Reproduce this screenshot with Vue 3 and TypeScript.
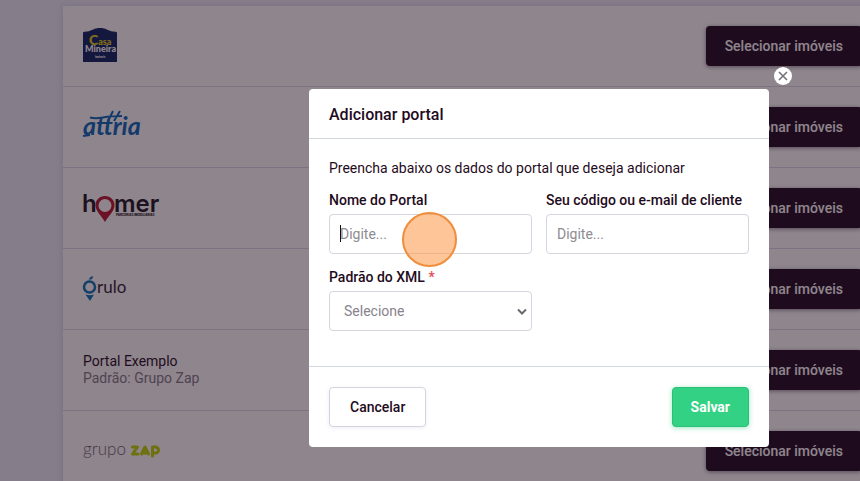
<script setup lang="ts">
import { ref } from 'vue'

interface Portal {
  id: string
  name: string
  standard?: string
}

const portals: Portal[] = [
  { id: 'casa-mineira', name: 'Casa Mineira' },
  { id: 'attria', name: 'attria' },
  { id: 'homer', name: 'homer' },
  { id: 'orulo', name: 'Órulo' },
  { id: 'exemplo', name: 'Portal Exemplo', standard: 'Grupo Zap' },
  { id: 'zap', name: 'grupo zap' },
]

const portalName = ref('')
const clientCode = ref('')
const xmlStandard = ref('')
</script>

<template>
  <div class="page">
    <main class="portals">
      <section v-for="portal in portals" :key="portal.id" class="portal">
        <svg v-if="portal.id === 'casa-mineira'" class="logo" width="80" height="40" viewBox="0 0 80 40" role="img" :aria-label="portal.name">
          <path d="M0 7Q0 5.500 3 5.500H5C9 4.500 11 2 17 2S25 4.500 29 5.500H31Q34 5.500 34 7V36H0Z" fill="#0a2460" />
          <text x="6" y="19" class="rounded" font-size="9" fill="#e0d01c"><tspan font-size="14">C</tspan>asa</text>
          <text x="2" y="26" class="rounded" font-size="9" fill="#fff">Mineira</text>
          <text x="12" y="32" class="rounded" font-size="3" fill="#fff">imóveis</text>
        </svg>
        <svg v-else-if="portal.id === 'attria'" class="logo" width="80" height="40" viewBox="0 0 80 40" role="img" :aria-label="portal.name">
          <text x="0" y="28" class="script" font-size="25" fill="#0868b8">attria</text>
          <path d="M7 10.500Q12 12 20 10.500T39 9M25 14L30 4M31 14L37 4M7 28L0 29" fill="none" stroke="#0868b8" stroke-width="2" />
        </svg>
        <svg v-else-if="portal.id === 'homer'" class="logo" width="80" height="40" viewBox="0 0 80 40" role="img" :aria-label="portal.name">
          <text x="-1" y="24" class="brand" font-weight="600" font-size="24" fill="#1b1620">h</text>
          <path d="M22 8C16.500 8 12.500 12 12.500 17C12.500 23 18 27 22 34C26 27 31.500 23 31.500 17C31.500 12 27.500 8 22 8ZM22 11A6.500 6.500 0 1 1 22 24A6.500 6.500 0 1 1 22 11Z" fill="#b81830" fill-rule="evenodd" />
          <text x="31" y="24" class="brand" font-weight="600" font-size="24" fill="#1b1620">mer</text>
          <text x="33" y="28" class="brand heavy" font-size="3" fill="#1b1620">PARCERIAS IMOBILIÁRIAS</text>
        </svg>
        <svg v-else-if="portal.id === 'orulo'" class="logo" width="80" height="40" viewBox="0 0 80 40" role="img" :aria-label="portal.name">
          <circle cx="6.500" cy="18" r="5.500" fill="none" stroke="#0872b4" stroke-width="2.500" />
          <path d="M5.500 10.500L8 7.500H10.500L8.500 10.500ZM2.500 25.500Q7 27 11 25.500L7 32Z" fill="#0872b4" />
          <text x="14" y="24" class="round" font-size="17" fill="#30242f">rulo</text>
        </svg>
        <svg v-else-if="portal.id === 'zap'" class="logo" width="80" height="40" viewBox="0 0 80 40" role="img" :aria-label="portal.name">
          <text x="0" y="24" class="round" font-weight="300" font-size="17" fill="#6b646e">grupo</text>
          <g fill="none" stroke="#c1d400" stroke-width="3" stroke-linejoin="round" stroke-linecap="round">
            <path d="M49.500 16H54.500L49.500 23H55" />
            <path d="M58.500 23L62 16L65.500 23M61 22H63.500" />
            <path d="M69.500 25V16H72.500A3 3 0 0 1 72.500 22H70.500" />
          </g>
        </svg>
        <div v-else class="custom">
          <strong>{{ portal.name }}</strong>
          <span>Padrão: {{ portal.standard }}</span>
        </div>
        <button type="button" class="button dark">Selecionar imóveis</button>
      </section>
    </main>

    <div class="overlay">
      <form class="modal" role="dialog" aria-labelledby="modal-title" @submit.prevent>
        <button type="button" class="close" aria-label="Fechar">
          <svg width="18" height="18" viewBox="0 0 18 18">
            <path d="M5 5L13 13M13 5L5 13" stroke="#75727a" stroke-width="1.600" />
          </svg>
        </button>
        <header><h1 id="modal-title">Adicionar portal</h1></header>
        <div class="content">
          <p>Preencha abaixo os dados do portal que deseja adicionar</p>
          <div class="fields">
            <div class="field">
              <label for="portal-name">Nome do Portal</label>
              <div class="control">
                <input id="portal-name" v-model="portalName" type="text" placeholder="Digite..." />
                <i class="caret"></i>
                <i class="pointer"></i>
              </div>
            </div>
            <div class="field">
              <label for="client-code">Seu código ou e-mail de cliente</label>
              <input id="client-code" v-model="clientCode" type="text" placeholder="Digite..." />
            </div>
            <div class="field">
              <label for="xml-standard">Padrão do XML <span class="required">*</span></label>
              <div class="control">
                <select id="xml-standard" v-model="xmlStandard">
                  <option value="">Selecione</option>
                </select>
                <svg class="chevron" width="10" height="8" viewBox="0 0 10 8">
                  <path d="M1 1.500L5 5.500L9 1.500" fill="none" stroke="#6b6870" stroke-width="2" />
                </svg>
              </div>
            </div>
          </div>
        </div>
        <footer>
          <button type="button" class="button light">Cancelar</button>
          <button type="submit" class="button green">Salvar</button>
        </footer>
      </form>
    </div>
  </div>
</template>

<style>
body {
  margin: 0;
  overflow: hidden;
}
</style>

<style scoped>
* {
  box-sizing: border-box;
}
.page {
  height: 100vh;
  overflow: hidden;
  padding: 6px 0 0 63px;
  background: #eeeefa;
  color: #1f0b21;
  font: 14px/18px Roboto, 'Liberation Sans', sans-serif;
}
.portals {
  margin-right: -22px;
  background: #fff;
  box-shadow: 0 0 6px rgba(60, 50, 100, 0.15);
}
.portal {
  display: flex;
  align-items: center;
  justify-content: space-between;
  height: 81px;
  padding: 0 20px;
  border-bottom: 1px solid #d8dae6;
}
.logo {
  display: block;
  overflow: visible;
}
.brand {
  font-family: Inter, sans-serif;
}
.heavy {
  font-weight: 800;
}
.rounded {
  font-family: Lato, sans-serif;
  font-weight: 900;
}
.script {
  font-family: Lato, sans-serif;
  font-style: italic;
  font-weight: 700;
}
.round {
  font-family: Lato, sans-serif;
}
.custom {
  display: flex;
  flex-direction: column;
  line-height: 17px;
}
.custom strong {
  font-weight: 400;
}
.custom span {
  color: #827a86;
}
.button {
  height: 40px;
  padding: 0 20px;
  border: 1px solid transparent;
  border-radius: 4px;
  font: 500 14px/18px Roboto, 'Liberation Sans', sans-serif;
  white-space: nowrap;
}
.dark {
  padding: 0 18px;
  background: #1f0b21;
  color: #fff;
  box-shadow: 0 1px 4px rgba(31, 11, 33, 0.5);
}
.light {
  border-color: #d3d5df;
  background: #fff;
  color: #1f0b21;
  box-shadow: 0 1px 4px rgba(80, 80, 160, 0.1);
}
.green {
  padding: 0 18px;
  border-color: #2dbf78;
  background: #32d184;
  color: #fff;
  font-weight: 700;
  box-shadow: 0 1px 5px rgba(50, 209, 132, 0.5);
}
.overlay {
  position: fixed;
  inset: 0;
  display: flex;
  align-items: flex-start;
  justify-content: center;
  padding: 89px 0 0 218px;
  background: rgba(29, 12, 28, 0.5);
}
.modal {
  position: relative;
  width: 100%;
  max-width: 460px;
  border-radius: 4px;
  background: #fff;
}
.close {
  position: absolute;
  top: -22px;
  right: -23px;
  display: grid;
  place-items: center;
  width: 18px;
  height: 18px;
  padding: 0;
  border: 0;
  border-radius: 50%;
  background: #fff;
}
header {
  padding: 17px 20px 14px;
  border-bottom: 1px solid #d3d7de;
}
h1 {
  margin: 0;
  font-size: 16px;
  font-weight: 500;
  line-height: 18px;
}
.content {
  padding: 20px 20px 35px;
}
p {
  margin: 0 0 14px;
}
.fields {
  display: grid;
  grid-template-columns: 1fr 1fr;
  gap: 14px;
}
.field {
  display: flex;
  flex-direction: column;
  gap: 5px;
}
label {
  font-weight: 500;
}
.required {
  color: #e5484d;
}
.control {
  position: relative;
}
input,
select {
  display: block;
  width: 100%;
  height: 40px;
  padding: 0 10px;
  border: 1px solid #d3d5df;
  border-radius: 4px;
  outline: 0;
  background: #fff;
  color: #87828b;
  font: 14px/18px Roboto, 'Liberation Sans', sans-serif;
}
input::placeholder {
  color: #8f8b92;
  opacity: 1;
}
select {
  appearance: none;
  padding: 0 14px;
}
.chevron {
  position: absolute;
  top: 17px;
  right: 5px;
  pointer-events: none;
}
.caret {
  position: absolute;
  top: 11px;
  left: 11px;
  width: 1px;
  height: 17px;
  background: #111;
}
.pointer {
  position: absolute;
  top: -2px;
  left: 73px;
  width: 55px;
  height: 55px;
  border: 2px solid #ef8e3c;
  border-radius: 50%;
  background: rgba(251, 159, 83, 0.6);
  z-index: 1;
  pointer-events: none;
}
footer {
  display: flex;
  justify-content: space-between;
  padding: 20px;
  border-top: 1px solid #d3d7de;
}
</style>
